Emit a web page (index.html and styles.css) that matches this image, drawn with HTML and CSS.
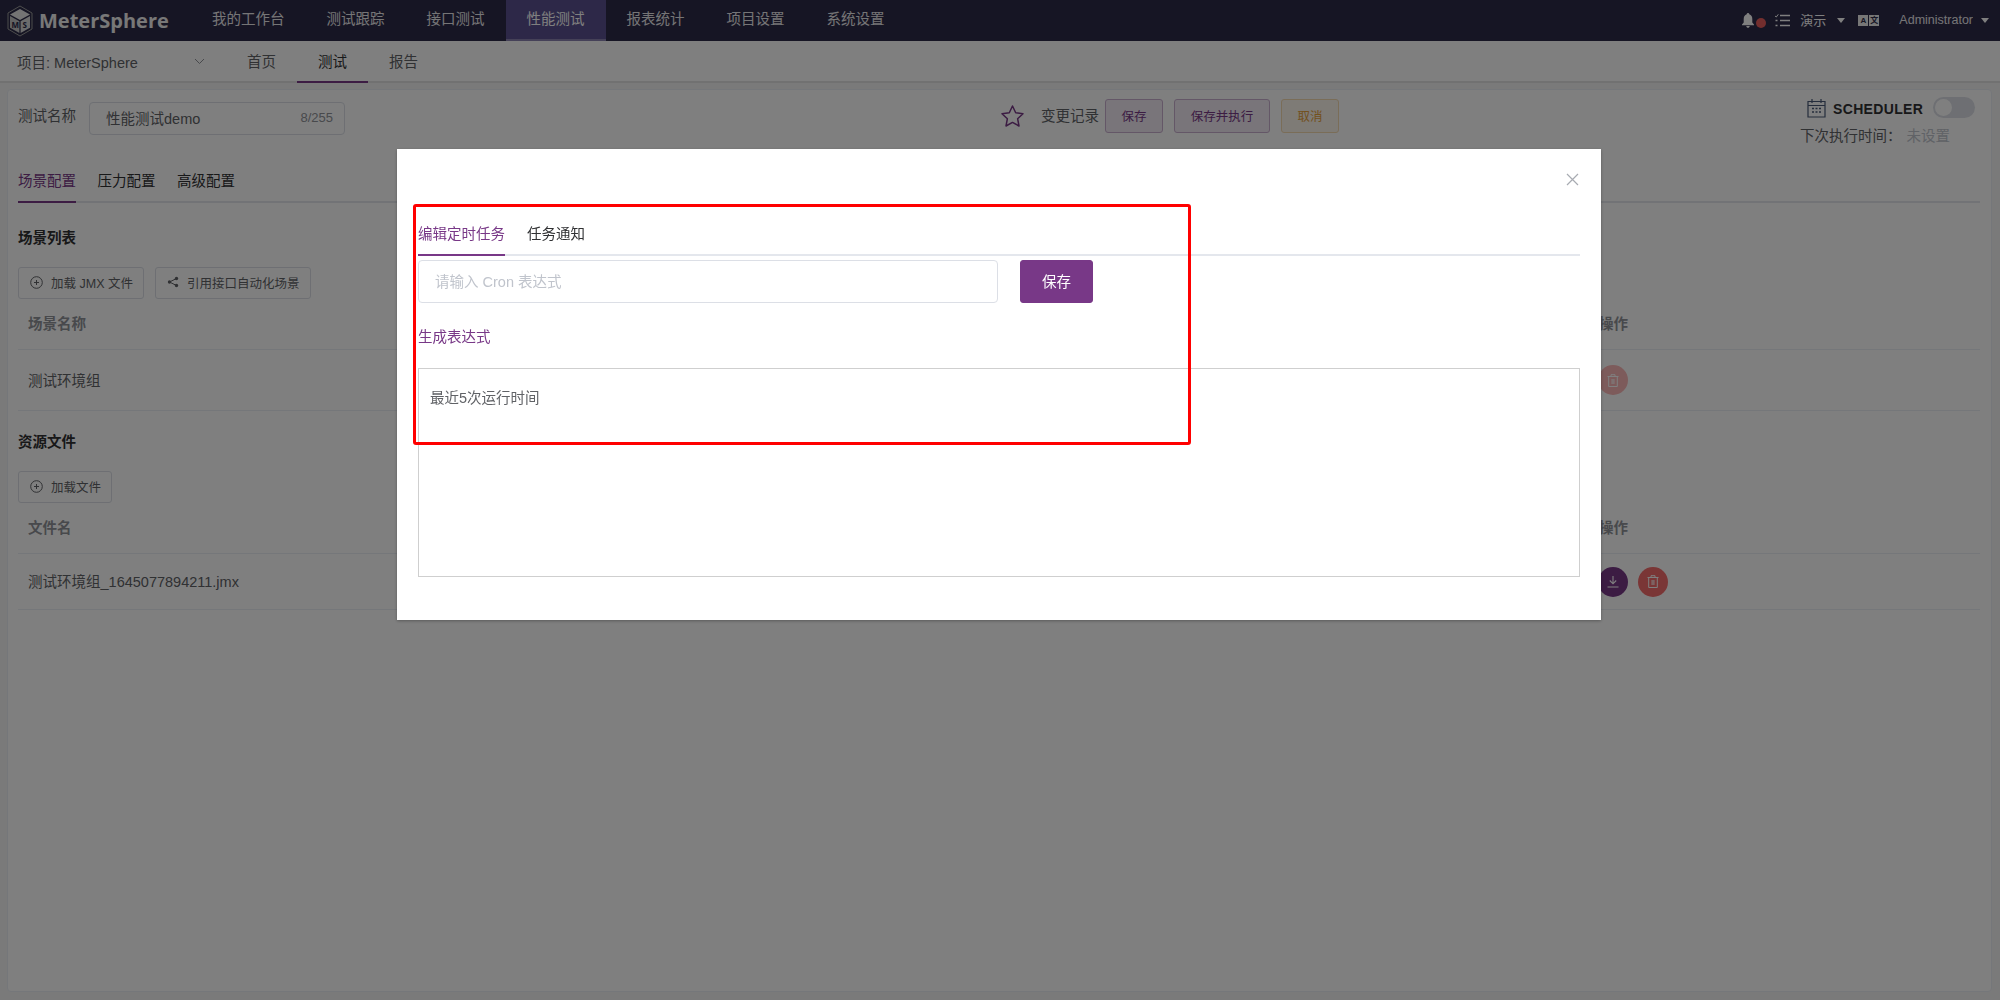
FILE: index.html
```html
<!DOCTYPE html>
<html lang="zh-CN">
<head>
<meta charset="utf-8">
<title>MeterSphere</title>
<link rel="stylesheet" href="styles.css">
</head>
<body>
<header class="topbar">
  <div class="logo">
    <svg class="logo-mark" width="26" height="32" viewBox="0 0 26 32">
      <path d="M13 1 25 8v16l-12 7L1 24V8z" fill="none" stroke="#9a9a9a" stroke-width="1"/>
      <path d="M13 4 23 9.500 13 15 3 9.500z" fill="#e8e8e8"/>
      <path d="M3 11 12.400 16.200V28L3 22.800z" fill="#c4c4c4"/>
      <path d="M23 11 13.600 16.200V28L23 22.800z" fill="#d8d8d8"/>
      <text x="4.500" y="23" class="logo-letter">M</text>
      <text x="15.500" y="23" class="logo-letter">S</text>
    </svg>
    <span class="logo-text">MeterSphere</span>
  </div>
  <nav class="mainnav">
    <a class="mainnav-item">我的工作台</a>
    <a class="mainnav-item">测试跟踪</a>
    <a class="mainnav-item">接口测试</a>
    <a class="mainnav-item is-active">性能测试</a>
    <a class="mainnav-item">报表统计</a>
    <a class="mainnav-item">项目设置</a>
    <a class="mainnav-item">系统设置</a>
  </nav>
  <div class="topright">
    <span class="bell">
      <svg width="12" height="15" viewBox="0 0 12 15"><path d="M6 0c.8 0 1.300.6 1.300 1.300C9.300 2 10.300 3.700 10.300 6v3.500L12 11.500v.7H0v-.7l1.700-2V6c0-2.300 1-4 3-4.700C4.700.6 5.200 0 6 0zM4.300 13h3.400c0 1-.8 1.800-1.700 1.800S4.300 14 4.300 13z" fill="#fff"/></svg>
      <i class="bell-dot"></i>
    </span>
    <svg class="list-icon" width="15" height="13" viewBox="0 0 15 13"><path d="M5 1.500h10M5 6.500h10M5 11.500h10" stroke="#fff" stroke-width="1.300"/><path d="M0 2l1.300 1L3.300.3" stroke="#fff" fill="none"/><path d="M.5 6.500h2M.5 11.500h2" stroke="#fff" stroke-width="1.300"/></svg>
    <span class="workspace">演示</span>
    <i class="caret caret-ws"></i>
    <span class="lang">
      <span class="lang-cell">A</span><span class="lang-cell">文</span>
    </span>
    <span class="user">Administrator</span>
    <i class="caret caret-user"></i>
  </div>
</header>

<div class="subbar">
  <div class="project">
    <span>项目: MeterSphere</span>
    <svg width="11" height="7" viewBox="0 0 11 7"><path d="M1 1l4.500 4.500L10 1" fill="none" stroke="#909399"/></svg>
  </div>
  <a class="subnav-item">首页</a>
  <a class="subnav-item is-active">测试</a>
  <a class="subnav-item">报告</a>
</div>

<main class="main">
  <section class="card">
    <div class="namerow">
      <label class="name-label">测试名称</label>
      <div class="name-input"><span class="name-value">性能测试demo</span><span class="name-count">8/255</span></div>
      <div class="actions">
        <svg class="star" width="25" height="24" viewBox="0 0 25 24"><path d="M12.500 2l3.200 6.800 7.300.9-5.400 5 1.400 7.300-6.500-3.600L6 22l1.400-7.300-5.400-5 7.300-.9z" fill="none" stroke="#783887" stroke-width="1.500" stroke-linejoin="round"/></svg>
        <span class="history">变更记录</span>
        <button class="btn-plain btn-save">保存</button>
        <button class="btn-plain btn-run">保存并执行</button>
        <button class="btn-plain btn-cancel">取消</button>
      </div>
      <div class="scheduler">
        <div class="sched-top">
          <svg width="19" height="20" viewBox="0 0 19 20"><path d="M1 3.500h17v15.500H1zM1 7.500h17M5 1v4M14 1v4" fill="none" stroke="#4a5a78" stroke-width="1.200"/><path d="M5 10.500h2M8.500 10.500h2M12 10.500h2M5 14h2M8.500 14h2M12 14h2" stroke="#4a5a78" stroke-width="1.500"/></svg>
          <span class="sched-title">SCHEDULER</span>
          <span class="toggle"><i class="toggle-knob"></i></span>
        </div>
        <div class="sched-next"><span>下次执行时间：</span><span class="sched-unset">未设置</span></div>
      </div>
    </div>

    <div class="tabs">
      <a class="tab is-active">场景配置</a>
      <a class="tab">压力配置</a>
      <a class="tab">高级配置</a>
    </div>

    <h3 class="section-title first">场景列表</h3>
    <div class="toolbar">
      <button class="btn-tool btn-jmx">
        <svg width="13" height="13" viewBox="0 0 13 13"><circle cx="6.500" cy="6.500" r="5.800" fill="none" stroke="#606266"/><path d="M4 6.500h5M6.500 4v5" stroke="#606266"/></svg>
        <span>加载 JMX 文件</span>
      </button>
      <button class="btn-tool btn-ref">
        <svg width="12" height="12" viewBox="0 0 12 12"><path d="M9.500 2.500 2.500 6l7 3.500" fill="none" stroke="#606266"/><circle cx="9.500" cy="2.500" r="1.700" fill="#606266"/><circle cx="2.500" cy="6" r="1.700" fill="#606266"/><circle cx="9.500" cy="9.500" r="1.700" fill="#606266"/></svg>
        <span>引用接口自动化场景</span>
      </button>
    </div>
    <div class="t-head"><span>场景名称</span><span class="t-op">操作</span></div>
    <div class="t-row">
      <span>测试环境组</span>
      <span class="t-btns">
        <button class="round round-del is-disabled"><svg width="12" height="13" viewBox="0 0 12 13"><path d="M.5 2.500h11M4 2.500V.7h4v1.800M1.700 2.500v10h8.600v-10" fill="none" stroke="#fff"/><rect x="4.300" y="5" width="3.400" height="5" fill="#fff" opacity=".6"/></svg></button>
      </span>
    </div>

    <h3 class="section-title">资源文件</h3>
    <div class="toolbar">
      <button class="btn-tool btn-file">
        <svg width="13" height="13" viewBox="0 0 13 13"><circle cx="6.500" cy="6.500" r="5.800" fill="none" stroke="#606266"/><path d="M4 6.500h5M6.500 4v5" stroke="#606266"/></svg>
        <span>加载文件</span>
      </button>
    </div>
    <div class="t-head"><span>文件名</span><span class="t-op">操作</span></div>
    <div class="t-row t-row-file">
      <span class="file-name">测试环境组_1645077894211.jmx</span>
      <span class="t-btns">
        <button class="round round-dl"><svg width="12" height="12" viewBox="0 0 12 12"><path d="M6 0v7.500M2.800 4.500 6 7.800l3.200-3.300M.5 11h11" fill="none" stroke="#fff" stroke-width="1.100"/></svg></button>
        <button class="round round-del"><svg width="12" height="13" viewBox="0 0 12 13"><path d="M.5 2.500h11M4 2.500V.7h4v1.800M1.700 2.500v10h8.600v-10" fill="none" stroke="#fff"/><rect x="4.300" y="5" width="3.400" height="5" fill="#fff" opacity=".6"/></svg></button>
      </span>
    </div>
  </section>
</main>

<div class="overlay"></div>
<div class="dialog">
  <svg class="dialog-close" width="13" height="13" viewBox="0 0 13 13"><path d="M1 1l11 11M12 1 1 12" stroke="#a8abb2" stroke-width="1.200"/></svg>
  <div class="d-tabs">
    <a class="d-tab is-active">编辑定时任务</a>
    <a class="d-tab">任务通知</a>
  </div>
  <div class="cron-row">
    <input class="cron-input" placeholder="请输入 Cron 表达式">
    <button class="cron-save">保存</button>
  </div>
  <a class="cron-link">生成表达式</a>
  <div class="cron-box">最近5次运行时间</div>
  <div class="annotation"></div>
</div>
</body>
</html>
```

FILE: styles.css
```css
* { box-sizing: border-box; }
html, body { margin: 0; height: 100%; }
body {
  height: 1000px;
  overflow: hidden;
  display: flex;
  flex-direction: column;
  background: #f5f5f5;
  font-family: "Liberation Sans", "Noto Sans CJK SC", sans-serif;
  font-size: 14.5px;
  color: #606266;
}
button, input { font-family: inherit; font-size: inherit; }

/* top bar */
.topbar {
  flex: none;
  height: 41px;
  display: flex;
  align-items: stretch;
  background: #2c2a48;
  color: #fff;
}
.logo { width: 191px; display: flex; align-items: center; padding-left: 7px; }
.logo-mark { flex: none; }
.logo-letter { font: bold 8px "Open Sans", sans-serif; fill: #2c2a48; }
.logo-text {
  margin-left: 6px;
  font: bold 20px/41px "Open Sans", sans-serif;
  letter-spacing: 0;
  color: #f0f0f0;
}
.mainnav { display: flex; }
.mainnav-item { padding: 0 21px; line-height: 39px; opacity: .9; }
.mainnav-item.is-active {
  background: #5a5190;
  border-bottom: 2px solid #8a83b0;
  opacity: 1;
}
.topright { margin-left: auto; display: flex; align-items: center; padding-right: 11px; }
.bell { position: relative; display: flex; width: 28px; margin-left: 1px; margin-right: 5px; }
.bell-dot {
  position: absolute;
  left: 14px;
  top: 5px;
  width: 10px;
  height: 10px;
  border-radius: 50%;
  background: #e65d5d;
}
.list-icon { margin-right: 9px; }
.workspace { font-size: 13px; margin-left: 1px; margin-bottom: 3px; }
.caret {
  width: 0;
  height: 0;
  border: 4px solid transparent;
  border-top: 5px solid #fff;
  border-bottom: 0;
}
.caret-ws { margin-left: 11px; }
.lang { display: flex; gap: 1px; margin-left: 13px; }
.lang-cell {
  width: 10px;
  height: 11px;
  background: #eee;
  color: #2c2a48;
  font-size: 8px;
  font-weight: bold;
  line-height: 11px;
  text-align: center;
}
.user { margin-left: 20px; font-size: 12.5px; opacity: .9; margin-bottom: 2px; }
.caret-user { margin-left: 8px; }

/* sub bar */
.subbar {
  flex: none;
  height: 42px;
  display: flex;
  background: #fff;
  border-bottom: 2px solid #e2e2e2;
}
.project {
  width: 226px;
  padding: 0 21px 0 17px;
  display: flex;
  align-items: center;
  justify-content: space-between;
  font-size: 14.5px;
  color: #606266;
}
.subnav-item { padding: 0 21px; line-height: 43px; height: 42px; color: #606266; }
.subnav-item.is-active { border-bottom: 2px solid #783887; color: #303133; }

/* main */
.main { flex: 1; min-height: 0; padding: 6px 8px 8px 7px; display: flex; }
.card {
  flex: 1;
  background: #fff;
  border: 1px solid #ebeef5;
  border-radius: 4px;
  padding: 12px 11px 0 10px;
}
.namerow { height: 33px; display: flex; }
.name-label { width: 71px; line-height: 29px; color: #606266; }
.name-input {
  width: 256px;
  height: 33px;
  display: flex;
  align-items: center;
  justify-content: space-between;
  padding: 0 11px 2px 16px;
  border: 1px solid #dcdfe6;
  border-radius: 4px;
  color: #606266;
}
.name-count { font-size: 13px; color: #909399; }
.actions { margin-left: 655px; display: flex; align-items: flex-start; height: 33px; }
.star { margin-top: 2px; }
.history { margin-left: 16px; width: 64px; line-height: 29px; color: #606266; }
.btn-plain {
  height: 34px;
  margin-top: -3px;
  padding: 0 0 2px;
  border: 1px solid #c9afcf;
  border-radius: 3px;
  background: #f2ebf4;
  color: #783887;
  font-size: 12.5px;
}
.btn-save { width: 58px; }
.btn-run { width: 96px; margin-left: 11px; }
.btn-cancel {
  width: 58px;
  margin-left: 11px;
  background: #fdf6ec;
  border-color: #f5dab1;
  color: #e6a23c;
}
.scheduler { margin-left: auto; padding-right: 5px; margin-top: -5px; width: 180px; }
.sched-top { display: flex; align-items: center; height: 21px; padding-left: 7px; }
.sched-title {
  margin-left: 7px;
  margin-top: 2px;
  font-size: 14px;
  font-weight: bold;
  letter-spacing: .35px;
  color: #303133;
}
.toggle {
  margin-left: auto;
  width: 42px;
  height: 21px;
  border-radius: 11px;
  background: #dcdfe6;
  padding: 2px;
}
.toggle-knob { display: block; width: 17px; height: 17px; border-radius: 50%; background: #fff; }
.sched-next { margin-top: 6px; font-size: 14.5px; color: #606266; display: flex; }
.sched-unset { margin-left: 5px; color: #c0c4cc; }

.tabs {
  margin-top: 26px;
  height: 42px;
  display: flex;
  gap: 21.500px;
  border-bottom: 2px solid #e4e7ed;
}
.tab { height: 42px; line-height: 40px; color: #303133; }
.tab.is-active { color: #783887; border-bottom: 2px solid #783887; }

.section-title {
  margin: 21px 0 0;
  font-size: 14.5px;
  line-height: 20px;
  font-weight: bold;
  color: #303133;
}
.section-title.first { margin-top: 25px; }
.toolbar { margin-top: 19px; display: flex; gap: 11px; }
.btn-tool {
  height: 32px;
  display: flex;
  align-items: center;
  padding: 0 0 2px 11px;
  border: 1px solid #dcdfe6;
  border-radius: 3px;
  background: #fff;
  color: #606266;
  font-size: 12.5px;
}
.btn-tool span { margin-left: 8px; }
.btn-jmx { width: 126px; }
.btn-ref { width: 156px; }
.btn-file { width: 94px; }
.t-head {
  height: 51px;
  padding: 0 0 3px 10px;
  display: flex;
  align-items: center;
  justify-content: space-between;
  border-bottom: 1px solid #ebeef5;
  font-size: 14.5px;
  font-weight: bold;
  color: #909399;
}
.t-op { width: 381px; }
.t-row {
  height: 61px;
  padding-left: 10px;
  display: flex;
  align-items: center;
  justify-content: space-between;
  border-bottom: 1px solid #ebeef5;
}
.t-row > span:first-child { margin-bottom: 2px; }
.t-row-file { height: 56px; }
.t-btns { width: 382px; display: flex; gap: 10px; }
.round {
  width: 30px;
  height: 30px;
  padding: 0;
  border: 0;
  border-radius: 50%;
  display: flex;
  align-items: center;
  justify-content: center;
}
.round-dl { background: #783887; }
.round-del { background: #f56c6c; }
.round-del.is-disabled { background: #fab6b6; }

/* modal */
.overlay { position: fixed; inset: 0; background: rgba(0, 0, 0, .5); }
.dialog {
  position: fixed;
  left: 397px;
  top: 149px;
  width: 1204px;
  height: 471px;
  padding: 64px 21px 0;
  background: #fff;
  box-shadow: 0 1px 3px rgba(0, 0, 0, .3);
}
.dialog-close { position: absolute; right: 22px; top: 24px; }
.d-tabs { height: 43px; display: flex; gap: 22px; border-bottom: 2px solid #e4e7ed; }
.d-tab { height: 43px; line-height: 43px; color: #303133; }
.d-tab.is-active { color: #783887; border-bottom: 2px solid #783887; }
.cron-row { margin-top: 4px; display: flex; gap: 22px; }
.cron-input {
  width: 580px;
  height: 43px;
  padding: 0 16px;
  border: 1px solid #dcdfe6;
  border-radius: 4px;
  outline: 0;
}
.cron-input::placeholder { color: #c0c4cc; }
.cron-save {
  width: 73px;
  height: 43px;
  padding: 0 0 2px;
  border: 1px solid #783887;
  border-radius: 3px;
  background: #783887;
  color: #fff;
  font-size: 14.5px;
}
.cron-link { display: block; margin-top: 24px; line-height: 20px; color: #783887; }
.cron-box {
  margin-top: 21px;
  height: 209px;
  padding: 19px 10px 19px 11px;
  border: 1px solid #cfcfcf;
  line-height: 20px;
  color: #606266;
}
.annotation {
  position: absolute;
  left: 16px;
  top: 55px;
  width: 778px;
  height: 241px;
  border: 3px solid #ff0000;
  border-radius: 3px;
}
```
